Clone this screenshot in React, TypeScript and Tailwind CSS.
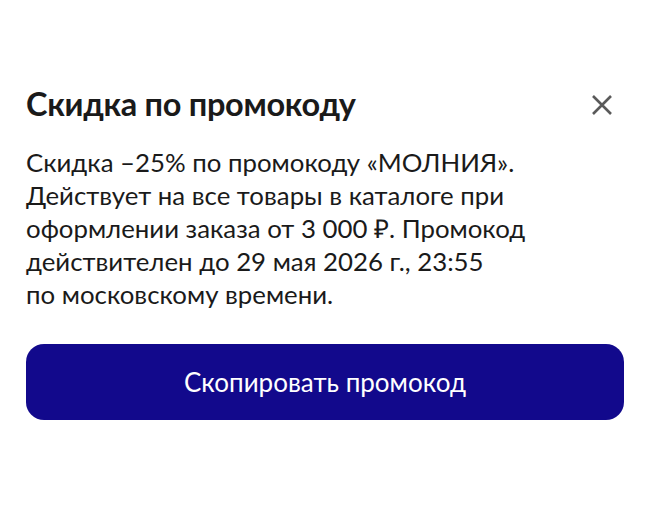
export default function App() {
  return (
    <div className="h-[531px] w-[650px] bg-white font-['Lato',sans-serif] text-[#1a1a1a]">
      <div className="px-[26px] pt-[84px]">
        <div className="flex items-start justify-between">
          <h2 className="text-[32.5px] font-bold leading-[40px] tracking-[-0.3px]">Скидка по промокоду</h2>
          <button className="mr-[10px] mt-[9px] text-[#5a5a5a]" aria-label="Закрыть">
            <svg width="24" height="24" viewBox="0 0 24 24" fill="none" stroke="currentColor" strokeWidth="2.6">
              <path d="M3 3l18 18M21 3L3 21" />
            </svg>
          </button>
        </div>
        <p className="mt-[22px] text-[25.8px] leading-[33px]">
          Скидка –25% по промокоду «МОЛНИЯ».
          <br />
          Действует на все товары в каталоге при
          <br />
          оформлении заказа от 3 000 ₽. Промокод
          <br />
          действителен до 29 мая 2026 г., 23:55
          <br />
          по московскому времени.
        </p>
        <button className="mt-[33px] flex h-[76px] w-full items-center justify-center rounded-[18px] bg-[#12098c] text-[26px] text-white">
          Скопировать промокод
        </button>
      </div>
    </div>
  );
}
